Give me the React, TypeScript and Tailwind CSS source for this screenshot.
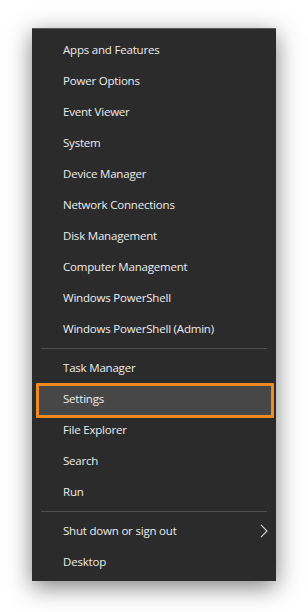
import React from "react";

const group1 = [
  "Apps and Features",
  "Power Options",
  "Event Viewer",
  "System",
  "Device Manager",
  "Network Connections",
  "Disk Management",
  "Computer Management",
  "Windows PowerShell",
  "Windows PowerShell (Admin)",
];
const group2 = ["Task Manager", "Settings", "File Explorer", "Search", "Run"];

function Item({ label, highlight, chevron }: { label: string; highlight?: boolean; chevron?: boolean }) {
  return (
    <div className="relative h-[31px] flex items-center pl-[31px] pr-[8px]">
      {highlight && (
        <div className="absolute left-[4px] right-[2px] top-[-1px] bottom-[-3px] bg-[#474747] border-[3px] border-[#ee8a1f] rounded-[1px]" />
      )}
      <span className="relative text-[11.5px] tracking-[-0.2px] leading-none text-[#ededed] whitespace-nowrap">{label}</span>
      {chevron && (
        <svg className="absolute right-[8px] top-[8.5px]" width="8" height="14" viewBox="0 0 8 14">
          <path d="M1 0.8 L7 7 L1 13.2" fill="none" stroke="#d8d8d8" strokeWidth="1.1" />
        </svg>
      )}
    </div>
  );
}

function Sep() {
  return (
    <div className="h-[8px] flex items-center px-[9px]">
      <div className="h-px w-full bg-[#4e4e4e]" />
    </div>
  );
}

export default function App() {
  return (
    <div className="w-[308px] h-[612px] bg-white pt-[28px] pl-[32px]" style={{ fontFamily: '"Open Sans", "Noto Sans", sans-serif' }}>
      <div className="w-[244px] bg-[#2b2b2b] border-t border-[#5a5a5a] pt-[5.5px] pb-[3.5px] shadow-[0_6px_22px_rgba(0,0,0,0.5)]">
        {group1.map((l) => (
          <Item key={l} label={l} />
        ))}
        <Sep />
        {group2.map((l) => (
          <Item key={l} label={l} highlight={l === "Settings"} />
        ))}
        <Sep />
        <Item label="Shut down or sign out" chevron />
        <Item label="Desktop" />
      </div>
    </div>
  );
}
